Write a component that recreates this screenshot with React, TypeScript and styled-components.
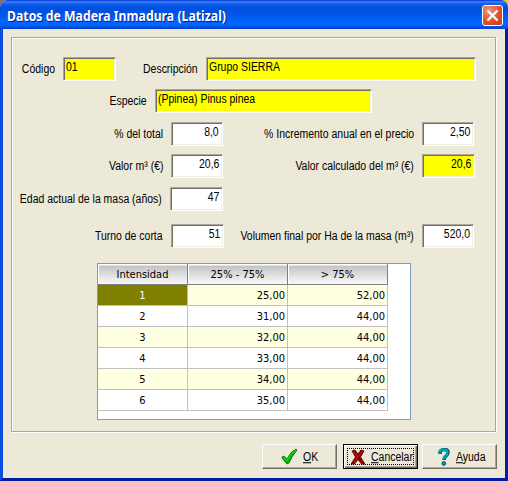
import React from 'react';
import styled, { createGlobalStyle, css } from 'styled-components';

const GlobalStyle = createGlobalStyle`
  body { margin: 0; overflow: hidden; background: linear-gradient(90deg, #8c6b58 50%, #e8c51c 50%); }
  * { box-sizing: border-box; }
`;

const Dialog = styled.div`
  width: 508px;
  height: 481px;
  display: flex;
  flex-direction: column;
  background: #ece9d8;
  border-radius: 7px 7px 0 0;
  overflow: hidden;
  font: 12px/24px 'Liberation Sans', Arial, sans-serif;
  color: #000;
`;

const TitleBar = styled.header`
  height: 29px;
  flex: none;
  display: flex;
  justify-content: space-between;
  padding: 5px 5px 0 7px;
  background: linear-gradient(#0831d9 0, #3c8cf8 2px, #1a66ee 3px, #0355e4 6px, #0050e0 10px, #0058ec 15px, #0066ff 21px, #0066ff 25px, #0052e2 27px, #003dd0 29px);
`;

const Title = styled.h1`
  margin: 0;
  font: bold 14px/22px 'Noto Sans', 'Open Sans', sans-serif;
  color: #fff;
  text-shadow: 1px 1px 0 #0a1883;
  white-space: nowrap;
  transform: scaleX(0.877);
  transform-origin: left;
`;

const CloseButton = styled.button`
  width: 21px;
  height: 21px;
  padding: 0;
  border: 1px solid #fff;
  border-radius: 3px;
  background: radial-gradient(circle at 30% 25%, #f0957a, #e2512b 55%, #c33a12);
  display: flex;
  align-items: center;
  justify-content: center;
`;

const Body = styled.main`
  flex: 1;
  display: flex;
  flex-direction: column;
  padding: 8px 8px 0;
  border: solid;
  border-width: 0 3px 3px;
  border-color: #0a4fe0 #001ea0 #001ea0 #0a4fe0;
`;

const Group = styled.section`
  width: 485px;
  height: 395px;
  flex: none;
  display: flex;
  flex-direction: column;
  padding-top: 19px;
  border: 1px solid #aca899;
  box-shadow: 1px 1px 0 #fff, inset 1px 1px 0 #fff;
`;

const Row = styled.div<{ $gap?: number }>`
  display: flex;
  height: 24px;
  flex: none;
  margin-bottom: ${p => p.$gap ?? 8}px;
`;

const Label = styled.label<{ $w: number }>`
  width: ${p => p.$w}px;
  flex: none;
  display: flex;
  justify-content: flex-end;
  padding-right: 8px;
  line-height: 24px;
  white-space: nowrap;
`;

const narrow = css`
  display: inline-block;
  white-space: nowrap;
  transform: scale(0.872, 1.04);
`;

const LabelText = styled.span`
  ${narrow}
  transform-origin: right;
`;

const Box = styled.div<{ $w: number; $calc?: boolean; $right?: boolean }>`
  width: ${p => p.$w}px;
  height: 24px;
  flex: none;
  display: flex;
  justify-content: ${p => (p.$right ? 'flex-end' : 'flex-start')};
  padding: 1px 3px 0 2px;
  line-height: 16px;
  background: ${p => (p.$calc ? '#ff0' : '#fff')};
  border: 1px solid;
  border-color: #aca899 #fff #fff #aca899;
  box-shadow: inset 1px 1px 0 #716f64, inset -1px -1px 0 #f1efe2;
`;

const BoxText = styled.span<{ $right?: boolean }>`
  ${narrow}
  height: 16px;
  transform-origin: ${p => (p.$right ? 'right' : 'left')};
`;

const Grid = styled.div`
  width: 314px;
  height: 157px;
  margin: 7px 0 0 85px;
  flex: none;
  background: #fff;
  border: 1px solid #7f9db9;
  font: 11px/22px 'DejaVu Sans Condensed', 'DejaVu Sans', sans-serif;
`;

const GridRow = styled.div`
  display: grid;
  grid-template-columns: 90px 100px 100px;
  grid-template-rows: 21px;
  height: 21px;
  &:nth-child(even) { background: linear-gradient(90deg, #ffffe1 290px, #fff 290px); }
`;

const HeadCell = styled.div`
  text-align: center;
  line-height: 21px;
  background: linear-gradient(#fff 0, #fff 1px, #c4c4c4 2px, #f6f6f6 19px);
  border: solid #808080;
  border-width: 0 1px 1px 0;
  box-shadow: inset 1px 0 0 #fff;
`;

const Cell = styled.div<{ $center?: boolean; $selected?: boolean }>`
  text-align: ${p => (p.$center ? 'center' : 'right')};
  padding-right: ${p => (p.$center ? 0 : 2)}px;
  border: solid #c0c0c0;
  border-width: 0 1px 1px 0;
  ${p => p.$selected && css`background: #808000; color: #fff;`}
`;

const Footer = styled.footer`
  display: flex;
  padding: 12px 0 0 251px;
`;

const Button = styled.button<{ $focus?: boolean; $left: number; $after?: number }>`
  width: 75px;
  height: 25px;
  flex: none;
  display: flex;
  align-items: center;
  margin: 0 ${p => p.$after ?? 0}px 0 0;
  padding: 0 0 0 ${p => p.$left}px;
  font: 12px/20px 'Liberation Sans', Arial, sans-serif;
  color: #000;
  background: #ece9d8;
  border: 1px solid;
  border-color: #fff #716f64 #716f64 #fff;
  box-shadow: inset -1px -1px 0 #aca899;
  svg { flex: none; }
  ${p => p.$focus && css`
    border-color: #000;
    box-shadow: inset 1px 1px 0 #fff, inset -1px -1px 0 #716f64, inset -2px -2px 0 #aca899;
    outline: 1px dotted #000;
    outline-offset: -5px;
  `}
`;

const Caption = styled.span<{ $gap: number }>`
  ${narrow}
  margin-left: ${p => p.$gap}px;
  transform-origin: left;
  &::first-letter { text-decoration: underline; }
`;

const Check = () => (
  <svg width="17" height="17" viewBox="0 0 17 17">
    <path d="M1 9l2-1 3 3Q9 4 15 1l1 1Q11 8 8 15l-2 1-5-6z" fill="#00b400" stroke="#006400" strokeWidth=".8" />
    <path d="M2 9l4 3.5Q9 6 15 2" fill="none" stroke="#30e020" />
  </svg>
);

const Cross = () => (
  <svg width="14" height="16" viewBox="0 0 14 16">
    <path d="M1 2l3-1 3 4 3-4 3 1-3.500 6L14 15h-3.500L7 10.500 3.500 15H0l4.500-7z" fill="#980000" stroke="#600000" strokeWidth=".9" />
    <path d="M2 2.500l5 5.500M12 2L2 13.500" stroke="#d42020" strokeWidth=".8" />
  </svg>
);

const Question = () => (
  <svg width="12" height="18" viewBox="0 0 12 18">
    <path d="M2 6V4q1-2.500 4-2.500 4 0 4 3 0 2-2 3.500T6 12" fill="none" stroke="#004060" strokeWidth="3.400" />
    <path d="M1.500 5.500V4q1-2.500 4-2.500 4 0 4 3 0 2-2 3.500t-2 3.500" fill="none" stroke="#00a8b8" strokeWidth="2.400" />
    <circle cx="5.800" cy="15.500" r="1.900" fill="#00a0b0" stroke="#004060" strokeWidth=".8" />
  </svg>
);

type FieldProps = { w: number; label: string; box: number; value: string; calc?: boolean; right?: boolean };

const Field = ({ w, label, box, value, calc, right }: FieldProps) => (
  <>
    <Label $w={w}><LabelText>{label}</LabelText></Label>
    <Box $w={box} $calc={calc} $right={right}><BoxText $right={right}>{value}</BoxText></Box>
  </>
);

const rows = [
  ['1', '25,00', '52,00'],
  ['2', '31,00', '44,00'],
  ['3', '32,00', '44,00'],
  ['4', '33,00', '44,00'],
  ['5', '34,00', '44,00'],
  ['6', '35,00', '44,00'],
];

export default function App() {
  return (
    <>
      <GlobalStyle />
      <Dialog>
        <TitleBar>
          <Title>Datos de Madera Inmadura (Latizal)</Title>
          <CloseButton aria-label="Cerrar">
            <svg width="13" height="13" viewBox="0 0 13 13">
              <path d="M1.500 1.500l10 10M11.500 1.500l-10 10" stroke="#fff" strokeWidth="2.300" />
            </svg>
          </CloseButton>
        </TitleBar>
        <Body>
          <Group>
            <Row>
              <Field w={51} label="Código" box={53} value="01" calc />
              <Field w={90} label="Descripción" box={270} value="Grupo SIERRA" calc />
            </Row>
            <Row $gap={9}>
              <Field w={143} label="Especie" box={217} value="(Ppinea) Pinus pinea" calc />
            </Row>
            <Row>
              <Field w={159} label="% del total" box={52} value="8,0" right />
              <Field w={199} label="% Incremento anual en el precio" box={52} value="2,50" right />
            </Row>
            <Row $gap={9}>
              <Field w={159} label="Valor m³ (€)" box={52} value="20,6" right />
              <Field w={199} label="Valor calculado del m³ (€)" box={53} value="20,6" calc right />
            </Row>
            <Row $gap={13}>
              <Field w={158} label="Edad actual de la masa (años)" box={53} value="47" right />
            </Row>
            <Row>
              <Field w={159} label="Turno de corta" box={53} value="51" right />
              <Field w={198} label="Volumen final por Ha de la masa (m³)" box={52} value="520,0" right />
            </Row>
            <Grid>
              <GridRow>
                <HeadCell>Intensidad</HeadCell>
                <HeadCell>25% - 75%</HeadCell>
                <HeadCell>&gt; 75%</HeadCell>
              </GridRow>
              {rows.map(([level, low, high], i) => (
                <GridRow key={level}>
                  <Cell $center $selected={i === 0}>{level}</Cell>
                  <Cell>{low}</Cell>
                  <Cell>{high}</Cell>
                </GridRow>
              ))}
            </Grid>
          </Group>
          <Footer>
            <Button $left={18} $after={6}><Check /><Caption $gap={5}>OK</Caption></Button>
            <Button $left={7} $after={4} $focus><Cross /><Caption $gap={6}>Cancelar</Caption></Button>
            <Button $left={15}><Question /><Caption $gap={6}>Ayuda</Caption></Button>
          </Footer>
        </Body>
      </Dialog>
    </>
  );
}
